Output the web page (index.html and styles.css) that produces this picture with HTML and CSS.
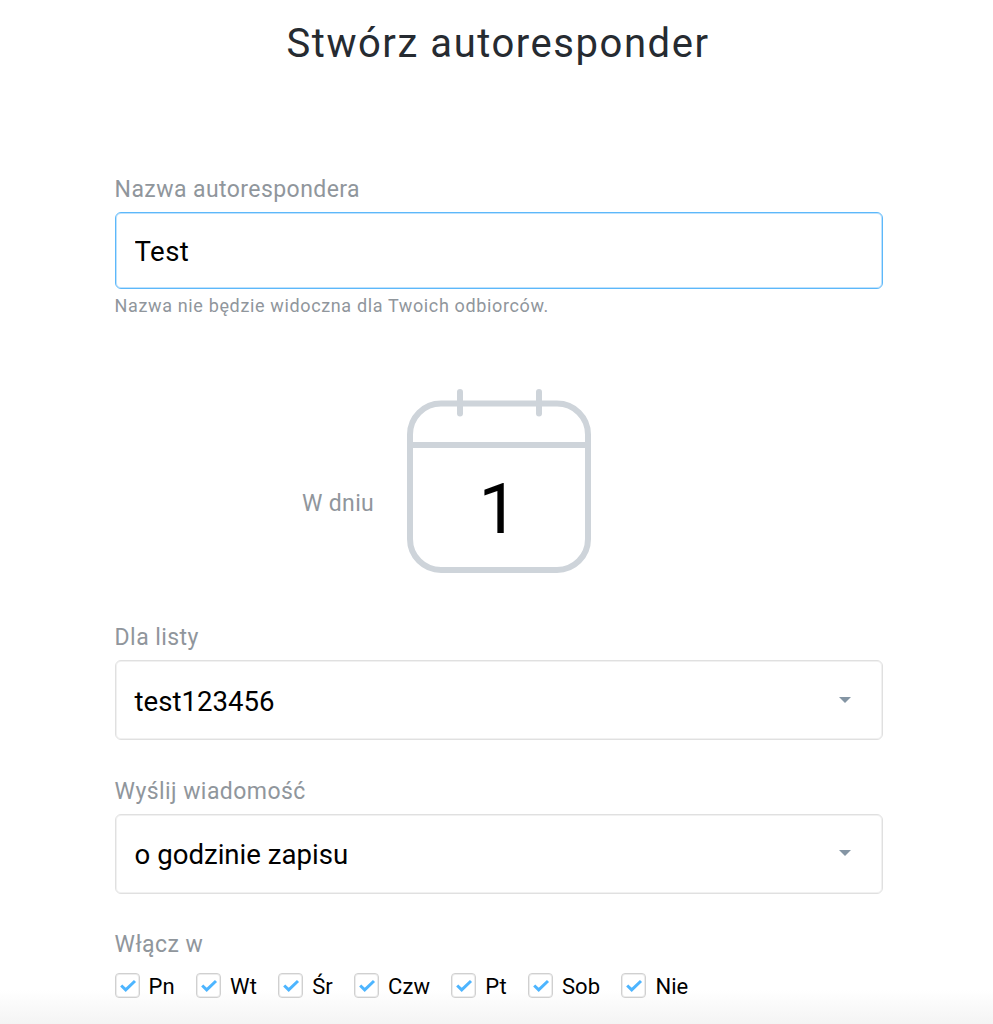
FILE: index.html
```html
<!DOCTYPE html>
<html lang="pl">
  <head>
    <meta charset="utf-8">
    <title>Stwórz autoresponder</title>
    <link rel="stylesheet" href="styles.css">
  </head>
  <body>
  <svg class="symbols">
    <symbol id="check" viewBox="0 0 23 23">
      <path d="M5.200 11.500l4.500 4.400 9.300-8.900" fill="none" stroke="#4db5ff" stroke-width="3"/>
    </symbol>
  </svg>
  <main>
    <h1 class="title">Stwórz autoresponder</h1>
    <form class="form">
      <section class="field name-field">
        <label class="label" for="name">Nazwa autorespondera</label>
        <input class="box text-input" id="name" type="text" value="Test">
        <p class="hint">Nazwa nie będzie widoczna dla Twoich odbiorców.</p>
      </section>

      <section class="day">
        <span class="day-label">W dniu</span>
        <div class="calendar">
          <svg class="calendar-frame" viewBox="0 0 186 186" fill="none" stroke="#ced4da" stroke-width="6">
            <rect x="4" y="15.500" width="178" height="166.5" rx="31"/>
            <path d="M4 57h178"/>
            <path d="M54 4v21.500M133 4v21.500" stroke-linecap="round"/>
          </svg>
          <span class="calendar-number">1</span>
        </div>
      </section>

      <section class="field">
        <span class="label">Dla listy</span>
        <div class="box select"><span>test123456</span><i class="arrow"></i></div>
      </section>

      <section class="field">
        <span class="label">Wyślij wiadomość</span>
        <div class="box select"><span>o godzinie zapisu</span><i class="arrow"></i></div>
      </section>

      <section class="field">
        <span class="label">Włącz w</span>
        <div class="days">
          <span class="check"><svg class="tick"><use href="#check"/></svg>Pn</span>
          <span class="check"><svg class="tick"><use href="#check"/></svg>Wt</span>
          <span class="check"><svg class="tick"><use href="#check"/></svg>Śr</span>
          <span class="check"><svg class="tick"><use href="#check"/></svg>Czw</span>
          <span class="check"><svg class="tick"><use href="#check"/></svg>Pt</span>
          <span class="check"><svg class="tick"><use href="#check"/></svg>Sob</span>
          <span class="check"><svg class="tick"><use href="#check"/></svg>Nie</span>
        </div>
      </section>
    </form>
  </main>
  </body>
</html>
```

FILE: styles.css
```css
* {
  box-sizing: border-box;
}
body {
  margin: 0;
  height: 1024px;
  overflow: hidden;
  font-family: Roboto, sans-serif;
  color: #000;
  background: linear-gradient(#fff 990px, #f4f4f4 1024px);
}
main {
  padding-top: 20px;
}
.symbols {
  display: none;
}
.title {
  margin: 0;
  font-size: 40px;
  line-height: 48px;
  font-weight: 400;
  letter-spacing: 1.55px;
  text-align: center;
  color: #262b31;
  padding-left: 3px;
}
.form {
  width: 768px;
  margin: 107px 0 0 114.6px;
}
.field {
  margin-bottom: 36.6px;
}
.name-field {
  margin-bottom: 0;
}
.label {
  display: block;
  height: 37px;
  font-size: 23px;
  line-height: 30px;
  letter-spacing: 0.43px;
  color: #90969c;
}
.box {
  display: flex;
  width: 768px;
  height: 80px;
  border: 1px solid #e0e0e0;
  border-radius: 6px;
  box-shadow: inset 0 0 0 1px #f1f1f1;
  background: #fff;
  font-family: inherit;
  font-size: 27.6px;
}
.text-input {
  height: 77px;
  padding: 2px 19px 0;
  border-color: #5cb8fa;
  box-shadow: inset 0 0 0 1px #bfe2fd;
  letter-spacing: 0.4px;
  color: #000;
  outline: none;
}
.hint {
  margin: 2px 0 0;
  font-size: 18px;
  line-height: 30px;
  letter-spacing: 0.64px;
  color: #90969c;
}
.day {
  display: flex;
  align-items: flex-start;
  height: 186px;
  margin: 67px 0 49px 187.4px;
}
.day-label {
  width: 104px;
  padding-top: 101px;
  font-size: 23px;
  line-height: 30px;
  letter-spacing: 0.35px;
  color: #90969c;
}
.calendar {
  display: grid;
  width: 186px;
  height: 186px;
}
.calendar-frame, .calendar-number {
  grid-area: 1 / 1;
}
.calendar-number {
  padding: 79px 1px 0 0;
  font-size: 71px;
  line-height: 84px;
  text-align: center;
}
.select {
  align-items: center;
  justify-content: space-between;
  padding: 2px 31px 0 19px;
}
.arrow {
  border: 6px solid transparent;
  border-top-color: #8495a4;
  border-bottom: 0;
  margin-top: -3px;
}
.days {
  display: flex;
  gap: 21.2px;
  margin-top: 7px;
}
.check {
  display: flex;
  align-items: center;
  gap: 9px;
  height: 25px;
  font-size: 22px;
  line-height: 27px;
  letter-spacing: 0.1px;
}
.tick {
  width: 25px;
  height: 25px;
  margin-top: -2px;
  border: 1px solid #d0d0d0;
  border-radius: 4px;
  box-shadow: inset 0 0 0 1px #ececec;
  background: #fff;
}
```
